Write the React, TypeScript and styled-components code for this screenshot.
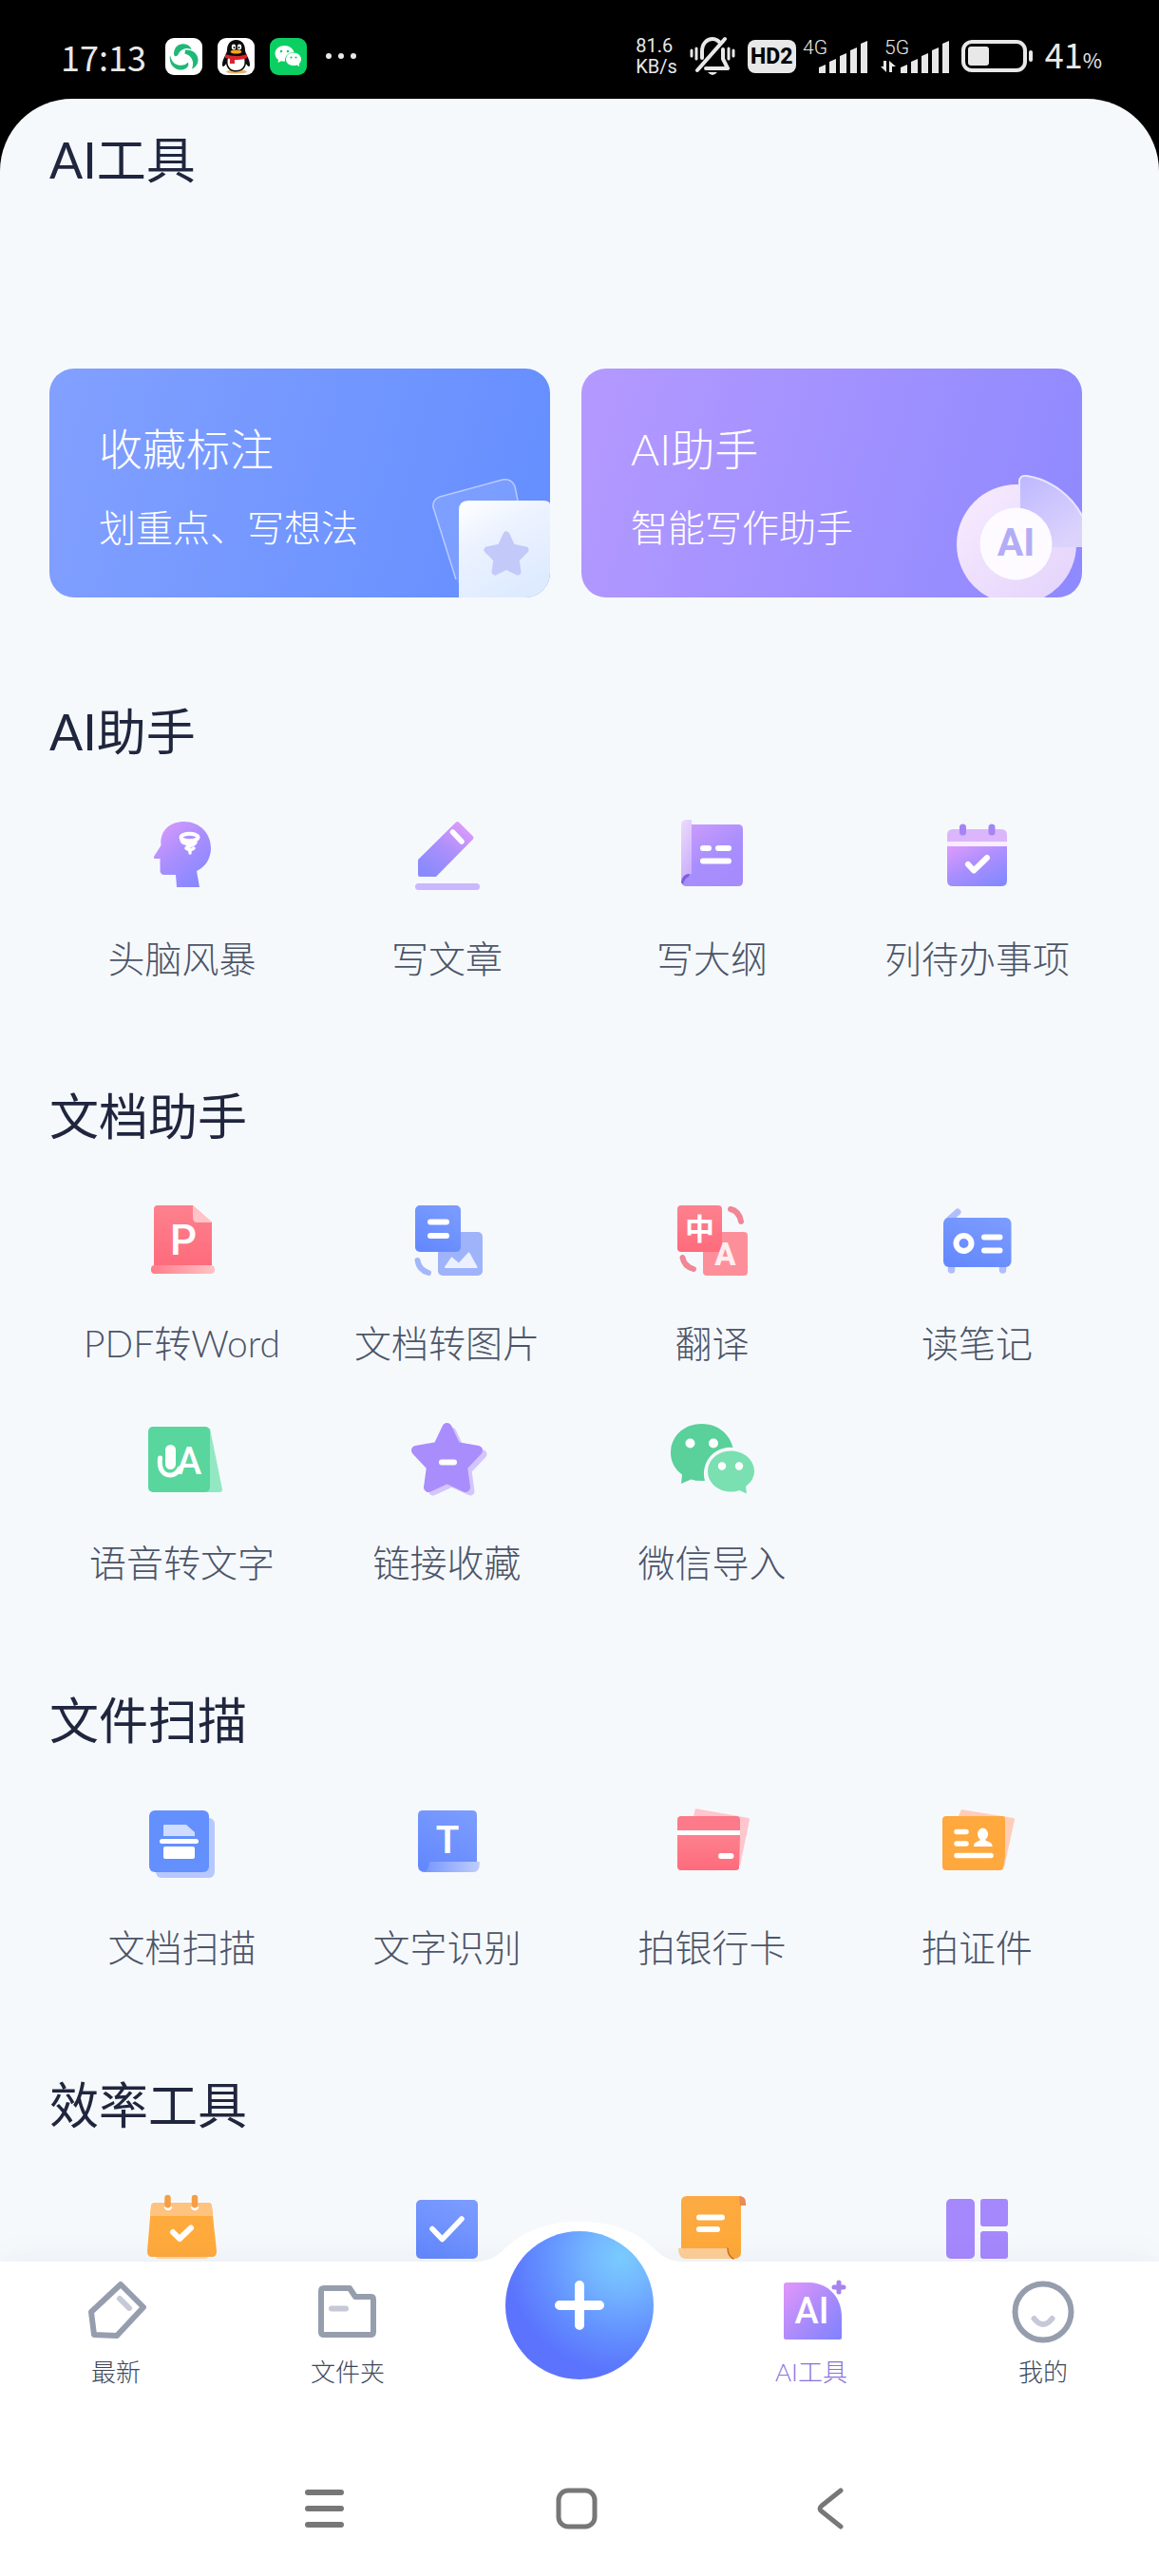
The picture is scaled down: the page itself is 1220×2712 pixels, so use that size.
import React from "react";
import styled, { createGlobalStyle } from "styled-components";

const GlobalStyle = createGlobalStyle`
  *, *::before, *::after { box-sizing: border-box; }
  body {
    margin: 0;
    background: #000;
    font-family: Lato, "Noto Sans CJK SC", sans-serif;
    font-weight: 300;
  }
  button {
    margin: 0;
    padding: 0;
    border: 0;
    background: none;
    font: inherit;
    color: inherit;
    text-align: inherit;
    cursor: pointer;
  }
  h1, h2, p { margin: 0; font-weight: inherit; }
  svg { display: block; flex: none; }
`;

/* ---------- shell ---------- */

const Screen = styled.div`
  display: flex;
  flex-direction: column;
  height: 100vh;
  background: #000;
`;

const StatusBar = styled.header`
  display: flex;
  flex: none;
  align-items: center;
  justify-content: space-between;
  height: 104px;
  padding: 14px 60px 0 64px;
  color: #e8e8e8;
  font-family: "Noto Sans CJK SC", sans-serif;
`;

const StatusGroup = styled.div<{ $gap: number }>`
  display: flex;
  align-items: center;
  gap: ${(p) => p.$gap}px;
`;

const Clock = styled.time`
  margin-right: 4px;
  font-size: 36px;
  line-height: 40px;
  font-weight: 400;
`;

const NetSpeed = styled.div`
  font-family: Roboto, sans-serif;
  font-size: 20px;
  line-height: 22px;
  font-weight: 400;
`;

const HdBadge = styled.div`
  display: flex;
  align-items: center;
  justify-content: center;
  width: 51px;
  height: 35px;
  border-radius: 8px;
  background: #e8e8e8;
  color: #000;
  font-family: Roboto, sans-serif;
  font-size: 23px;
  font-weight: 800;
`;

const Signals = styled.div`
  display: flex;
  gap: 14px;
  margin-left: -6px;
`;

const BatteryLevel = styled.div`
  font-size: 36px;
  line-height: 40px;
  font-weight: 400;
  small { font-size: 22px; }
`;

const Sheet = styled.main`
  flex: 1;
  min-height: 0;
  overflow: hidden;
  padding: 29px 52px 0;
  border-radius: 76px 76px 0 0;
  background: #f6f9fc;
  color: #20263e;
`;

const PageTitle = styled.h1`
  margin-bottom: 185px;
  font-size: 52px;
  line-height: 70px;
  font-weight: 400;
`;

/* ---------- feature cards ---------- */

const Cards = styled.div`
  display: grid;
  grid-template-columns: 1fr 1fr;
  gap: 33px;
  margin: 0 29px 106px 0;
`;

const Card = styled.button<{ $from: string; $to: string }>`
  position: relative;
  display: flex;
  flex-direction: column;
  gap: 27px;
  height: 241px;
  padding: 55px 52px;
  overflow: hidden;
  border-radius: 26px;
  background: linear-gradient(105deg, ${(p) => p.$from}, ${(p) => p.$to});
  color: #fff;
`;

const CardTitle = styled.span`
  font-size: 46px;
  line-height: 60px;
`;

const CardText = styled.span`
  font-size: 39px;
  line-height: 50px;
`;

const CardArt = styled.svg`
  position: absolute;
  right: 0;
  bottom: 0;
`;

/* ---------- tool sections ---------- */

const Section = styled.section`
  margin-bottom: 105px;
`;

const SectionTitle = styled.h2`
  margin-bottom: 48px;
  font-size: 52px;
  line-height: 70px;
  font-weight: 400;
`;

const ToolGrid = styled.div`
  display: grid;
  grid-template-columns: repeat(4, 1fr);
  row-gap: 49px;
`;

const Tool = styled.button`
  display: flex;
  flex-direction: column;
  align-items: center;
  gap: 35px;
  color: #4c5568;
  white-space: nowrap;
`;

const ToolLabel = styled.span`
  font-size: 39px;
  line-height: 52px;
`;

/* ---------- bottom bars ---------- */

const TabBar = styled.nav`
  position: relative;
  display: grid;
  flex: none;
  grid-template-columns: repeat(5, 1fr);
  height: 189px;
  background: #fff;
  box-shadow: 0 -6px 28px rgba(40, 60, 90, 0.05);
`;

const Tab = styled.button<{ $active?: boolean }>`
  display: flex;
  flex-direction: column;
  align-items: center;
  gap: 13px;
  padding-top: 20px;
  color: ${(p) => (p.$active ? "#8a72dc" : "#3e4658")};
  font-size: 26px;
  line-height: 35px;
`;

const Bump = styled.svg`
  position: absolute;
  top: -42px;
  left: 50%;
  transform: translateX(-50%);
`;

const AddButton = styled.button`
  position: relative;
  display: flex;
  align-items: center;
  justify-content: center;
  justify-self: center;
  width: 156px;
  height: 156px;
  margin-top: -32px;
  border-radius: 50%;
  background: radial-gradient(circle at 78% 18%, #79cbff 0, #74b8ff 18%, #6390ff 46%, #5b74fd 68%, #6070fb 100%);
`;

const SystemNav = styled.nav`
  position: relative;
  display: flex;
  flex: none;
  align-items: center;
  justify-content: center;
  gap: 222px;
  height: 142px;
  padding-right: 6px;
  background: #fff;
`;

/* ---------- status glyphs ---------- */

const SyncAppIcon = () => (
  <svg width="39" height="39" viewBox="0 0 39 39">
    <rect width="39" height="39" rx="9" fill="#fff" />
    <g fill="#1fb877">
      <path d="M9 17C9 9 15 5 21 6.500C24.500 7 27 9.500 27.500 12C22 9.500 16 11.500 13.500 17.500C12 19.500 9.500 20 9 17Z" />
      <path d="M21 12.500C29 12 34.500 17 34.500 23C34.500 28 31 31.500 28 32.500C31 25 28 18.500 20.500 16.500Z" />
      <path d="M5 18C6 23 8 27 13.500 28.500C18 29.500 22 28 24 25.500C26 31 20 34 15 33.500C8 32.500 3.500 26 5 18Z" />
    </g>
  </svg>
);

const PenguinAppIcon = () => (
  <svg width="39" height="39" viewBox="0 0 39 39">
    <rect width="39" height="39" rx="9" fill="#fff" />
    <ellipse cx="20" cy="35.500" rx="11" ry="2" fill="#e8b36a" />
    <path d="M19.500 2C13 2 10 7 10 13C10 16 5 22 5 28C5 32 8 29 9 27C10 33 14 35.500 19.500 35.500C25 35.500 29 33 30 27C31 29 34 32 34 28C34 22 29 16 29 13C29 7 26 2 19.500 2Z" fill="#0b0b0b" />
    <path d="M11 21C9 29 13 34 19.500 34C26 34 30 29 28 21Z" fill="#fff" />
    <ellipse cx="17" cy="9.500" rx="2.200" ry="3" fill="#fff" />
    <ellipse cx="23" cy="9.500" rx="2.200" ry="3" fill="#fff" />
    <circle cx="17.500" cy="10" r="1" />
    <circle cx="22.500" cy="10" r="1" />
    <ellipse cx="19.500" cy="14.500" rx="6" ry="2" fill="#f4a51c" />
    <path d="M8 17Q19.500 21 31 17V21Q25 23.500 18 23V27H13V22L8 21Z" fill="#d8242c" />
  </svg>
);

const ChatAppIcon = () => (
  <svg width="39" height="39" viewBox="0 0 39 39">
    <rect width="39" height="39" rx="9" fill="#0bcf62" />
    <path d="M15.500 8C9.500 8 5.500 12 5.500 16.500C5.500 19 7 21.500 9 23L8.500 26L12 24.300Q14 24.800 16 24.600A9 8.500 0 0 1 25.500 15C24.500 11 20.500 8 15.500 8Z" fill="#fff" />
    <path d="M25 15.500C20.500 15.500 17 18.500 17 22.500C17 26.500 20.500 29 25 29Q27 29 28.500 28.400L31 30V27Q33 25 33 22.500C33 18.500 29.500 15.500 25 15.500Z" fill="#fff" />
    <g fill="#0bcf62">
      <circle cx="12" cy="14" r="1.300" />
      <circle cx="19" cy="14" r="1.300" />
      <circle cx="22.500" cy="20.500" r="1.100" />
      <circle cx="27.500" cy="20.500" r="1.100" />
    </g>
  </svg>
);

const MoreDots = () => (
  <svg width="36" height="6" viewBox="-4 0 36 6" fill="#e8e8e8">
    <circle cx="3" cy="3" r="3" />
    <circle cx="16" cy="3" r="3" />
    <circle cx="29" cy="3" r="3" />
  </svg>
);

const MutedBell = () => (
  <svg width="48" height="42" viewBox="0 0 48 42" fill="none" stroke="#e8e8e8" strokeWidth="4" strokeLinecap="round" strokeLinejoin="round">
    <path d="M13 23V16C13 8 18 3 24 3Q28 3 31 6" />
    <path d="M37 3L8 36" />
    <path d="M35 14V24L40 34H17" />
    <path d="M19 38H29Q24 44 19 38Z" fill="#e8e8e8" stroke="none" />
    <path d="M7 13V24M2 15V21M41 13V24M46 15V21" strokeWidth="3" />
  </svg>
);

const Signal = ({ label, data }: { label: string; data?: boolean }) => {
  const shift = data ? 21 : 17;
  const tops = [28, 22, 16, 10, 3];
  return (
    <svg width={shift + 51} height="51" viewBox={`0 -6 ${shift + 51} 51`} fill="#e8e8e8">
      <text x={data ? 4 : 0} y="17" fontFamily="Roboto, sans-serif" fontSize="21" fontWeight="300">{label}</text>
      {tops.map((top, i) => (
        <path key={top} d={`M${shift + i * 11} ${top + 3}L${shift + i * 11 + 7} ${top}V37H${shift + i * 11}Z`} />
      ))}
      {data && <path d="M6 24V36L0 30H3V24ZM9 36V24L16 30H12V36Z" />}
    </svg>
  );
};

const Battery = () => (
  <svg width="75" height="34" viewBox="0 0 75 34">
    <rect x="2" y="2" width="65" height="30" rx="9" fill="none" stroke="#e8e8e8" strokeWidth="4" />
    <rect x="7" y="7" width="22" height="20" rx="3" fill="#e8e8e8" />
    <rect x="71" y="11" width="4" height="12" rx="2" fill="#e8e8e8" />
  </svg>
);

/* ---------- tool icons ---------- */

const IconBox = ({ children }: { children: React.ReactNode }) => (
  <svg width="95" height="95" viewBox="0 0 95 95" fill="none" strokeLinecap="round" strokeLinejoin="round" aria-hidden="true">
    {children}
  </svg>
);

const GradientSheet = styled.svg`
  position: absolute;
`;

const Gradients = () => (
  <GradientSheet width="0" height="0" aria-hidden="true">
    <defs>
      <linearGradient id="g-violet" x1="0.1" y1="0" x2="0.8" y2="1">
        <stop offset="0" stopColor="#d99afc" />
        <stop offset="0.5" stopColor="#a98eff" />
        <stop offset="1" stopColor="#8488ff" />
      </linearGradient>
      <linearGradient id="g-pen" x1="0.9" y1="0" x2="0.2" y2="1">
        <stop offset="0" stopColor="#e09cfa" />
        <stop offset="0.5" stopColor="#ad90fb" />
        <stop offset="1" stopColor="#8a8afd" />
      </linearGradient>
      <linearGradient id="g-book" x1="0" y1="0" x2="0.6" y2="1">
        <stop offset="0" stopColor="#cf9dfd" />
        <stop offset="0.6" stopColor="#a98ffd" />
        <stop offset="1" stopColor="#a58bfc" />
      </linearGradient>
      <linearGradient id="g-spine" x1="0" y1="0" x2="0.3" y2="1">
        <stop offset="0" stopColor="#ecdcfb" />
        <stop offset="1" stopColor="#cdb0fa" />
      </linearGradient>
      <linearGradient id="g-red" x1="0" y1="0" x2="0" y2="1">
        <stop offset="0" stopColor="#fd818e" />
        <stop offset="1" stopColor="#fe6b7c" />
      </linearGradient>
      <linearGradient id="g-redbase" x1="0" y1="0" x2="1" y2="0">
        <stop offset="0" stopColor="#fe7c88" />
        <stop offset="1" stopColor="#ffc3c6" />
      </linearGradient>
      <linearGradient id="g-blue" x1="0.8" y1="0" x2="0.3" y2="1">
        <stop offset="0" stopColor="#7b9cff" />
        <stop offset="1" stopColor="#6489fd" />
      </linearGradient>
      <linearGradient id="g-roll" x1="0" y1="0" x2="1" y2="0">
        <stop offset="0" stopColor="#7597fd" />
        <stop offset="1" stopColor="#c0cdfe" />
      </linearGradient>
      <linearGradient id="g-orange" x1="0" y1="0" x2="0.5" y2="1">
        <stop offset="0" stopColor="#fbaa45" />
        <stop offset="1" stopColor="#ffa938" />
      </linearGradient>
      <linearGradient id="g-sheet" x1="0" y1="0" x2="0.5" y2="1">
        <stop offset="0" stopColor="#ffffff" />
        <stop offset="0.4" stopColor="#edf3ff" />
        <stop offset="1" stopColor="#deebff" />
      </linearGradient>
      <linearGradient id="g-ring" x1="0" y1="0" x2="1" y2="1">
        <stop offset="0" stopColor="#f8ecff" />
        <stop offset="1" stopColor="#e2d2fb" />
      </linearGradient>
      <linearGradient id="g-slice" x1="0" y1="0" x2="0.6" y2="1">
        <stop offset="0" stopColor="#bdb8ff" />
        <stop offset="1" stopColor="#dcd3fc" />
      </linearGradient>
      <linearGradient id="g-tab" x1="0" y1="0.1" x2="1" y2="1">
        <stop offset="0" stopColor="#de96fb" />
        <stop offset="0.55" stopColor="#a68afb" />
        <stop offset="1" stopColor="#7f82ff" />
      </linearGradient>
    </defs>
  </GradientSheet>
);

const BrainIcon = () => (
  <IconBox>
    <path d="M50 12C66 12 78 24 78 40C78 51 72 60 63 64L66 81H42L41 68H29Q24.500 68 24.500 63V51H19Q17 50 18.500 48L25.500 37C24 22 34 12 50 12Z" fill="url(#g-violet)" />
    <ellipse cx="55.500" cy="28.500" rx="9" ry="3.800" stroke="#fff" strokeWidth="4" />
    <path d="M47 31C48 37 58 36 62 34C60 38 53 37 52 40C55 43 59 41 60 40M56 43V45" stroke="#fff" strokeWidth="3.500" />
  </IconBox>
);

const PenIcon = () => (
  <IconBox>
    <path d="M58.500 14L73.500 29L35 68H19V53Z" fill="url(#g-pen)" stroke="url(#g-pen)" strokeWidth="4" />
    <path d="M53.500 23L63 33" stroke="#fff" strokeWidth="5.500" />
    <rect x="14" y="77" width="68" height="7" rx="3.500" fill="#c9b8fd" />
  </IconBox>
);

const OutlineIcon = () => (
  <IconBox>
    <path d="M20 15H75Q80 15 80 20V75Q80 80 75 80H21Q15 80 15 74Z" fill="url(#g-book)" />
    <path d="M15 15Q15 10 21 10H26V67Q17 67 15 76Z" fill="url(#g-spine)" />
    <path d="M15 76Q16 67 24 67L23 70Q19 71 17 78Z" fill="#7d5fe0" />
    <path d="M38 40H44M54 40H65M38 53.500H65" stroke="#fff" strokeWidth="6" />
  </IconBox>
);

const TodoIcon = () => (
  <IconBox>
    <path d="M22 20H73Q79 20 79 26V33H16V26Q16 20 22 20Z" fill="#dcb6fc" />
    <path d="M16 33H79V38H16Z" fill="#f8ecfe" />
    <path d="M16 38H79V74Q79 80 73 80H22Q16 80 16 74Z" fill="url(#g-violet)" />
    <path d="M32.500 18V23M63 18V23" stroke="#a584f5" strokeWidth="7" />
    <path d="M38 57L44 63.500L58 50" stroke="#fff" strokeWidth="6" />
  </IconBox>
);

const PdfIcon = () => (
  <IconBox>
    <path d="M22 11H59L79 29V75H18V15Q18 11 22 11Z" fill="url(#g-red)" />
    <path d="M59 11L79 29H64Q59 29 59 24Z" fill="#ffc4c8" />
    <rect x="15" y="74" width="67" height="9" rx="4" fill="url(#g-redbase)" />
    <text x="49" y="63" fill="#fff" fontFamily="Roboto, sans-serif" fontSize="44" fontWeight="500" textAnchor="middle">P</text>
  </IconBox>
);

const DocImageIcon = () => (
  <IconBox>
    <rect x="38" y="39" width="47" height="46" rx="5" fill="#9fb3fb" />
    <path d="M46 76L52.500 66.500L60 73L70.500 61.500L78.500 76Z" fill="#eaf0ff" stroke="#eaf0ff" strokeWidth="2" />
    <path d="M44 60H57Q62 60 62 55V39H43Q38 39 38 44V60Z" fill="#8ba5fb" />
    <rect x="14" y="11" width="48" height="49" rx="5" fill="url(#g-blue)" />
    <path d="M30 28.500H47M30 43H47" stroke="#fff" strokeWidth="6" />
    <path d="M16.500 69Q18 79 28 82" stroke="#a3b7fb" strokeWidth="6" />
  </IconBox>
);

const TranslateIcon = () => (
  <IconBox>
    <rect x="38" y="39" width="47" height="46" rx="4" fill="#fd8f9a" />
    <rect x="11" y="11" width="47" height="49" rx="4" fill="url(#g-red)" />
    <path d="M67 15Q76 17 78 28M16.500 66Q18 75 28 78" stroke="#f08696" strokeWidth="6" />
    <text x="34.500" y="47" fill="#fff" fontSize="31" fontWeight="700" textAnchor="middle">中</text>
    <text x="61.500" y="74" fill="#ffeef0" fontFamily="Roboto, sans-serif" fontSize="33" fontWeight="800" textAnchor="middle">A</text>
  </IconBox>
);

const RadioIcon = () => (
  <IconBox>
    <path d="M27 18L17 27" stroke="#b0bffb" strokeWidth="7" />
    <path d="M20.500 75V79M74.500 75V79" stroke="#b0bffb" strokeWidth="7.500" />
    <rect x="12" y="24" width="71.500" height="52" rx="6" fill="url(#g-blue)" />
    <circle cx="33.500" cy="51" r="8" stroke="#fff" strokeWidth="6" />
    <path d="M55 44.500H71.500M55 58.500H71.500" stroke="#fff" strokeWidth="6" />
  </IconBox>
);

const VoiceIcon = () => (
  <IconBox>
    <path d="M72 14L77 15L90 79Q90 82 87 82H70Z" fill="#92e8c2" />
    <rect x="12" y="13" width="65" height="69" rx="5" fill="#58d69e" />
    <rect x="30" y="32" width="11" height="26" rx="5.500" fill="#fff" />
    <path d="M24.500 46C23 58 28 64 35 64Q42 64 45 57" stroke="#fff" strokeWidth="5" />
    <text x="55" y="63" fill="#fff" fontFamily="Roboto, sans-serif" fontSize="40" fontWeight="500" textAnchor="middle">A</text>
  </IconBox>
);

const starPoints = "47.500,14 57,34 80,38 64,55 67,77 47.500,68 28,77 31,55 15,38 38,34";

const StarIcon = () => (
  <IconBox>
    <polygon points={starPoints} transform="translate(5 4)" fill="#d3c5fd" stroke="#d3c5fd" strokeWidth="9" />
    <polygon points={starPoints} fill="#a98dfc" stroke="#a98dfc" strokeWidth="10" />
    <path d="M42 50.500H55" stroke="#fff" strokeWidth="6" />
  </IconBox>
);

const WechatIcon = () => (
  <IconBox>
    <path d="M36.500 10C18 10 4 23 4 40.500C4 50 8.500 58 16 63.500L15 73L25.500 68.500Q31 70.500 40 70A27.500 27.500 0 0 1 69.500 35C66 20 53 10 36.500 10Z" fill="#5ad09b" />
    <path d="M67.500 38.500C54 38.500 43 48 43 60C43 72.500 54 81.500 67.500 81.500Q73 81.500 76.500 80L84 83.500L83 76Q92 69 92 60C92 48 81 38.500 67.500 38.500Z" fill="#7adfb1" />
    <g fill="#fff">
      <circle cx="24.500" cy="30.500" r="5" />
      <circle cx="49" cy="30.500" r="5" />
      <circle cx="58" cy="54.500" r="4.200" />
      <circle cx="76" cy="54.500" r="4.200" />
    </g>
  </IconBox>
);

const ScanDocIcon = () => (
  <IconBox>
    <rect x="20" y="20" width="62" height="63" rx="6" fill="#b7c8fe" />
    <rect x="13" y="12" width="63" height="65" rx="6" fill="#6490fe" />
    <path d="M28 28Q28 27 29 27H52L61 35V39H28Z" fill="#cfdcff" />
    <path d="M26.500 44.500H62.500" stroke="#fff" strokeWidth="5" />
    <rect x="28" y="50" width="33" height="13" rx="2" fill="#fff" />
  </IconBox>
);

const TextScanIcon = () => (
  <IconBox>
    <path d="M22 12H74Q79 12 79 17V70L24 77Q17 77 17 70V17Q17 12 22 12Z" fill="url(#g-blue)" />
    <path d="M23 77Q29 75 29 66H82Q82 77 76 77Z" fill="url(#g-roll)" />
    <text x="48" y="57" fill="#fff" fontFamily="Roboto, sans-serif" fontSize="40" fontWeight="600" textAnchor="middle">T</text>
  </IconBox>
);

const BankCardIcon = () => (
  <IconBox>
    <path d="M30 10L86 20Q87 21 87 22L77 70L28 18Z" fill="#ffc6cd" />
    <path d="M15 18H73Q77 18 77 22V33H11V22Q11 18 15 18Z" fill="#fd7a8a" />
    <path d="M11 33H77V38H11Z" fill="#fff" />
    <path d="M11 38H77L76 73Q75 75 73 75H15Q11 75 11 71Z" fill="url(#g-red)" />
    <path d="M57 60H67.500" stroke="#fff" strokeWidth="6" />
  </IconBox>
);

const IdCardIcon = () => (
  <IconBox>
    <path d="M31 11L86 20Q87 21 87 22L76 72L28 18Z" fill="#ffcdb9" />
    <path d="M15 18H74Q77 18 77 21V60L75 73Q74 75 72 75H15Q11 75 11 71V22Q11 18 15 18Z" fill="#fea83e" />
    <path d="M26 34.500H36M26 47H36M26 59.500H62" stroke="#fff" strokeWidth="5.500" />
    <ellipse cx="53.500" cy="37" rx="5.500" ry="6.500" fill="#fff" />
    <path d="M51 42H56Q56 44 60 45Q64 47 63.500 50H44Q43.500 47 47 45Q51 44 51 42Z" fill="#fff" />
  </IconBox>
);

const HabitIcon = () => (
  <IconBox>
    <rect x="20" y="72" width="55" height="7" rx="3" fill="#ffd7a8" />
    <path d="M20 20H75Q79 20 79 24L84 71Q84 77 79 77H16Q11 77 11 71L15 24Q15 20 20 20Z" fill="#ffaa3c" />
    <path d="M20 20H75Q79 20 79 24L80 34H14L15 24Q15 20 20 20Z" fill="#fec37e" />
    <path d="M30 25Q33 29 36 25M58 25Q61 29 64 25" stroke="#fff" strokeWidth="2.500" />
    <path d="M32.500 15V22M61 15V22" stroke="#f69e45" strokeWidth="6.500" />
    <path d="M38 51L45 58L57 46.500" stroke="#fff" strokeWidth="6" />
  </IconBox>
);

const CheckIcon = () => (
  <IconBox>
    <rect x="15" y="17" width="65" height="62" rx="5" fill="url(#g-blue)" />
    <path d="M32 47.500L42.500 58.500L63 37" stroke="#fff" strokeWidth="5.500" />
  </IconBox>
);

const ScrollIcon = () => (
  <IconBox>
    <path d="M21 13H78V72Q78 79 71 79H60L15 70V19Q15 13 21 13Z" fill="url(#g-orange)" />
    <path d="M76 13Q83 13 83 20V23H77Z" fill="#ea8b58" />
    <path d="M12 68H64Q64 76 70 79H19Q12 78 12 68Z" fill="#ffcf96" />
    <path d="M64 68Q64 76 70 79" stroke="#c8741e" strokeWidth="1.500" />
    <path d="M34 35.500H58M34 48H53" stroke="#fff" strokeWidth="6" />
  </IconBox>
);

const BoardIcon = () => (
  <IconBox>
    <rect x="15" y="16" width="30" height="63" rx="5" fill="#a688fd" />
    <rect x="51" y="16" width="29" height="29" rx="3" fill="#a688fd" />
    <rect x="51" y="50" width="29" height="29" rx="3" fill="#a688fd" />
  </IconBox>
);

/* ---------- tab icons ---------- */

const TabIconBox = ({ children }: { children: React.ReactNode }) => (
  <svg width="66" height="66" viewBox="0 0 66 66" fill="none" stroke="#969eae" strokeWidth="6" strokeLinecap="round" strokeLinejoin="round" overflow="visible" aria-hidden="true">
    {children}
  </svg>
);

const LatestIcon = () => (
  <TabIconBox>
    <path d="M38 4L62 28L34 58L10 57L7 33Z" />
    <path d="M37 19L47 29" stroke="#c6c9d7" />
  </TabIconBox>
);

const FolderIcon = () => (
  <TabIconBox>
    <path d="M8 8H35L41 17H58Q60 17 60 20V54Q60 57 57 57H8Q5 57 5 54V11Q5 8 8 8Z" />
    <path d="M16 29.500H31" stroke="#c6c9d7" />
  </TabIconBox>
);

const AiTabIcon = () => (
  <TabIconBox>
    <g stroke="none">
      <path d="M7 2H31C52 3 65 18 65 39V60Q65 62 63 62H6Q4 62 4 60V5Q4 2 7 2Z" fill="url(#g-tab)" />
      <text x="33.500" y="45" fill="#fff" fontFamily="Roboto, sans-serif" fontSize="38" fontWeight="500" textAnchor="middle">AI</text>
    </g>
    <path d="M62 2V12M57 7H67" stroke="#a684ee" strokeWidth="5" />
  </TabIconBox>
);

const FaceIcon = () => (
  <TabIconBox>
    <circle cx="33" cy="33" r="29.500" />
    <path d="M23.500 40Q33 52 42.500 40" stroke="#c6c9d7" />
  </TabIconBox>
);

/* ---------- content ---------- */

type ToolItem = { name: string; icon: React.ComponentType };

const sections: { title: string; tools: ToolItem[] }[] = [
  {
    title: "AI助手",
    tools: [
      { name: "头脑风暴", icon: BrainIcon },
      { name: "写文章", icon: PenIcon },
      { name: "写大纲", icon: OutlineIcon },
      { name: "列待办事项", icon: TodoIcon },
    ],
  },
  {
    title: "文档助手",
    tools: [
      { name: "PDF转Word", icon: PdfIcon },
      { name: "文档转图片", icon: DocImageIcon },
      { name: "翻译", icon: TranslateIcon },
      { name: "读笔记", icon: RadioIcon },
      { name: "语音转文字", icon: VoiceIcon },
      { name: "链接收藏", icon: StarIcon },
      { name: "微信导入", icon: WechatIcon },
    ],
  },
  {
    title: "文件扫描",
    tools: [
      { name: "文档扫描", icon: ScanDocIcon },
      { name: "文字识别", icon: TextScanIcon },
      { name: "拍银行卡", icon: BankCardIcon },
      { name: "拍证件", icon: IdCardIcon },
    ],
  },
];

const efficiencyTools: ToolItem[] = [
  { name: "日程", icon: HabitIcon },
  { name: "待办", icon: CheckIcon },
  { name: "便签", icon: ScrollIcon },
  { name: "看板", icon: BoardIcon },
];

export default function App() {
  return (
    <Screen>
      <GlobalStyle />
      <Gradients />

      <StatusBar>
        <StatusGroup $gap={16}>
          <Clock>17:13</Clock>
          <SyncAppIcon />
          <PenguinAppIcon />
          <ChatAppIcon />
          <MoreDots />
        </StatusGroup>
        <StatusGroup $gap={13}>
          <NetSpeed>
            <div>81.6</div>
            <div>KB/s</div>
          </NetSpeed>
          <MutedBell />
          <HdBadge>HD2</HdBadge>
          <Signals>
            <Signal label="4G" />
            <Signal label="5G" data />
          </Signals>
          <Battery />
          <BatteryLevel>
            41<small>%</small>
          </BatteryLevel>
        </StatusGroup>
      </StatusBar>

      <Sheet>
        <PageTitle>AI工具</PageTitle>

        <Cards>
          <Card type="button" $from="#82a0ff" $to="#648eff">
            <CardTitle>收藏标注</CardTitle>
            <CardText>划重点、写想法</CardText>
            <CardArt width="130" height="130" viewBox="0 0 130 130" fill="none">
              <path d="M7 35Q6 27 14 24L80 6Q89 4 93 13L97 40V120H35Z" fill="#fff" fillOpacity="0.12" />
              <path d="M31 111L7 35Q6 27 14 24L80 6Q89 4 93 13L96 28" stroke="#b9ccff" strokeWidth="1.500" />
              <path d="M34 130V38Q34 28 44 28H122Q130 28 130 32V130Z" fill="url(#g-sheet)" />
              <polygon points="84,64 90,77 104,80 94,90 96,103 84,97 72,103 74,90 64,80 78,77" fill="#c3caf9" stroke="#c3caf9" strokeWidth="7" strokeLinejoin="round" />
            </CardArt>
          </Card>
          <Card type="button" $from="#b499ff" $to="#8e89ff">
            <CardTitle>AI助手</CardTitle>
            <CardText>智能写作助手</CardText>
            <CardArt width="136" height="136" viewBox="0 0 136 136" fill="none">
              <circle cx="67" cy="80" r="63" fill="url(#g-ring)" />
              <path d="M70 83V14Q70 7 78 8C104 12 127 30 138 54V83Z" fill="url(#g-slice)" />
              <path d="M70 50V14Q70 7 78 8C104 12 127 30 138 54" stroke="#e9e5ff" strokeWidth="2" />
              <circle cx="66.500" cy="79.500" r="38" fill="#fdfbff" />
              <text x="66.500" y="92" fill="#b3acf7" fontFamily="Roboto, sans-serif" fontSize="41" fontWeight="700" textAnchor="middle">AI</text>
            </CardArt>
          </Card>
        </Cards>

        {sections.map((section) => (
          <Section key={section.title}>
            <SectionTitle>{section.title}</SectionTitle>
            <ToolGrid>
              {section.tools.map(({ name, icon: Icon }) => (
                <Tool key={name} type="button">
                  <Icon />
                  <ToolLabel>{name}</ToolLabel>
                </Tool>
              ))}
            </ToolGrid>
          </Section>
        ))}

        <section>
          <SectionTitle>效率工具</SectionTitle>
          <ToolGrid>
            {efficiencyTools.map(({ name, icon: Icon }) => (
              <Tool key={name} type="button" aria-label={name}>
                <Icon />
              </Tool>
            ))}
          </ToolGrid>
        </section>
      </Sheet>

      <TabBar>
        <Bump width="220" height="43" viewBox="0 0 220 43" aria-hidden="true">
          <path d="M0 42C22 42 28 30 40 21C58 7 82 0 110 0C138 0 162 7 180 21C192 30 198 42 220 42V43H0Z" fill="#fff" />
        </Bump>
        <Tab type="button">
          <LatestIcon />
          最新
        </Tab>
        <Tab type="button">
          <FolderIcon />
          文件夹
        </Tab>
        <AddButton type="button" aria-label="新建">
          <svg width="52" height="52" viewBox="0 0 52 52" stroke="#fff" strokeWidth="10" strokeLinecap="round">
            <path d="M26 5V47M5 26H47" />
          </svg>
        </AddButton>
        <Tab type="button" $active>
          <AiTabIcon />
          AI工具
        </Tab>
        <Tab type="button">
          <FaceIcon />
          我的
        </Tab>
      </TabBar>

      <SystemNav>
        <button type="button" aria-label="最近任务">
          <svg width="44" height="44" viewBox="0 0 44 44" stroke="#777" strokeWidth="6" strokeLinecap="round">
            <path d="M5 5H40M5 22H40M5 39H40" />
          </svg>
        </button>
        <button type="button" aria-label="主屏幕">
          <svg width="44" height="44" viewBox="0 0 44 44" fill="none" stroke="#777" strokeWidth="5">
            <rect x="3" y="3" width="38" height="38" rx="10" />
          </svg>
        </button>
        <button type="button" aria-label="返回">
          <svg width="44" height="44" viewBox="0 0 44 44" fill="none" stroke="#777" strokeWidth="5" strokeLinecap="round" strokeLinejoin="round">
            <path d="M34 3L14 19Q10 22 14 25L34 41" />
          </svg>
        </button>
      </SystemNav>
    </Screen>
  );
}
